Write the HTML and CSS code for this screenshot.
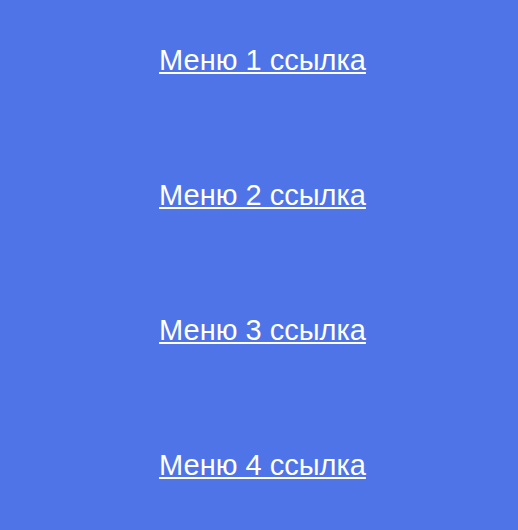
FILE: index.html
```html
<!DOCTYPE html>
<html lang="ru">
<head>
<meta charset="utf-8">
<link rel="stylesheet" href="styles.css">
</head>
<body>
<nav class="menu">
  <a class="menu-link" href="#">Меню 1 ссылка</a>
  <a class="menu-link" href="#">Меню 2 ссылка</a>
  <a class="menu-link" href="#">Меню 3 ссылка</a>
  <a class="menu-link" href="#">Меню 4 ссылка</a>
</nav>
</body>
</html>
```
FILE: styles.css
```css
html, body {
  margin: 0;
  height: 100%;
}
body {
  background: #4e74e8;
  font-family: "Liberation Sans", Arial, sans-serif;
}
.menu {
  display: flex;
  flex-direction: column;
  align-items: center;
  gap: 103px;
  padding-top: 44px;
  padding-left: 7px;
}
.menu-link {
  color: #ffffff;
  font-size: 29px;
  line-height: 32px;
  text-decoration: underline;
}
```
